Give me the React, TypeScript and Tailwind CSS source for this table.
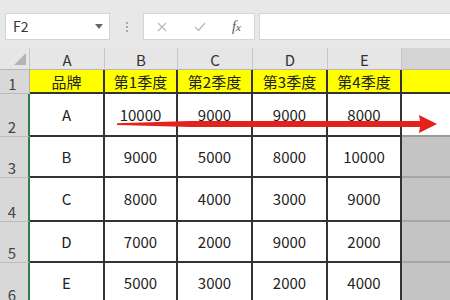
import React from "react";

const font = { fontFamily: '"Noto Sans CJK SC", "Liberation Sans", sans-serif' };

const cols = ["A", "B", "C", "D", "E"];
const widths = ["w-[75px]", "w-[73px]", "w-[75px]", "w-[75px]", "w-[74px]"];

const header = ["品牌", "第1季度", "第2季度", "第3季度", "第4季度"];

const rows = [
  { n: 2, h: "h-[43px]", cells: ["A", "10000", "9000", "9000", "8000"] },
  { n: 3, h: "h-[41px]", cells: ["B", "9000", "5000", "8000", "10000"] },
  { n: 4, h: "h-[44px]", cells: ["C", "8000", "4000", "3000", "9000"] },
  { n: 5, h: "h-[41px]", cells: ["D", "7000", "2000", "9000", "2000"] },
  { n: 6, h: "h-[42px]", cells: ["E", "5000", "3000", "2000", "4000"] },
];

function Toolbar() {
  return (
    <div className="h-[48px] bg-[#e8e8e8] flex items-start pt-[13px] pl-[5px]">
      <div className="w-[105px] h-[27px] bg-white border border-[#d4d4d4] flex items-center justify-between pl-[7px] pr-[6px]">
        <span className="text-[14px] text-[#333]">F2</span>
        <svg width="8" height="5" viewBox="0 0 8 5">
          <path d="M0 0 L8 0 L4 5 Z" fill="#666" />
        </svg>
      </div>
      <div className="w-[33px] h-[27px] flex flex-col items-center justify-center gap-[2px]">
        <span className="w-[2px] h-[2px] bg-[#a8a8a8]" />
        <span className="w-[2px] h-[2px] bg-[#a8a8a8]" />
        <span className="w-[2px] h-[2px] bg-[#a8a8a8]" />
      </div>
      <div className="w-[112px] h-[27px] bg-white border border-[#d4d4d4] flex items-center">
        <svg className="ml-[13px]" width="10" height="10" viewBox="0 0 10 10">
          <path d="M1 1 L9 9 M9 1 L1 9" stroke="#b8b8b8" strokeWidth="1.2" />
        </svg>
        <svg className="ml-[27px]" width="12" height="10" viewBox="0 0 12 10">
          <path d="M1 5 L4.5 8.5 L11 1" stroke="#b8b8b8" strokeWidth="1.2" fill="none" />
        </svg>
        <span
          className="ml-[26px] text-[14px] italic text-[#555]"
          style={{ fontFamily: '"Liberation Serif", serif' }}
        >
          f<span className="text-[11px]">x</span>
        </span>
      </div>
      <div className="ml-[4px] flex-1 h-[27px] bg-white border border-[#d4d4d4] border-r-0" />
    </div>
  );
}

function ColumnHeader() {
  return (
    <div className="flex h-[22px] bg-[#e6e6e6] border-b border-[#b8b8b8]">
      <div className="w-[30px] border-r border-[#c8c8c8] flex items-end justify-end pr-[3px] pb-[4px]">
        <svg width="12" height="12" viewBox="0 0 12 12">
          <path d="M12 0 L12 12 L0 12 Z" fill="#b4b4b4" />
        </svg>
      </div>
      {cols.map((c, i) => (
        <div
          key={c}
          className={`${widths[i]} border-r border-[#c8c8c8] flex items-center justify-center pt-[1px] text-[15px] text-[#333] leading-none`}
        >
          {c}
        </div>
      ))}
      <div className="flex-1 bg-[#d4d4d4]" />
    </div>
  );
}

function RowHead({ n, green }: { n: number; green?: boolean }) {
  return (
    <div
      className={`w-[30px] bg-[#d8d8d8] border-b border-[#bcbcbc] flex items-end justify-center pr-[4px] text-[15px] leading-[18px] text-[#444] ${
        green ? "border-r-2 border-r-[#2e7d4f]" : "border-r border-r-[#b0b0b0]"
      }`}
    >
      {n}
    </div>
  );
}

export default function App() {
  return (
    <div className="w-[450px] h-[300px] overflow-hidden bg-white relative" style={font}>
      <Toolbar />
      <ColumnHeader />
      <div className="flex h-[24px]">
        <RowHead n={1} />
        {header.map((t, i) => (
          <div
            key={i}
            className={`${widths[i]} bg-[#ffff00] border-r-2 border-b-2 border-[#333] flex items-center justify-center pt-[2px] text-[15px] text-[#222]`}
          >
            {t}
          </div>
        ))}
        <div className="flex-1 bg-[#ffff00] border-b-2 border-[#333]" />
      </div>
      {rows.map((r) => (
        <div key={r.n} className={`flex ${r.h}`}>
          <RowHead n={r.n} green />
          {r.cells.map((v, i) => (
            <div
              key={i}
              className={`${widths[i]} border-r-2 border-b-2 border-[#333] flex items-center justify-center pt-[1px] text-[15px] text-[#222]`}
            >
              {v}
            </div>
          ))}
          <div
            className={`flex-1 border-b-2 ${
              r.n === 2 ? "bg-white border-[#9a9a9a]" : "bg-[#c4c4c4] border-[#a6a6a6]"
            }`}
          />
        </div>
      ))}
      <svg
        className="absolute left-0 top-0 pointer-events-none"
        width="450"
        height="300"
        viewBox="0 0 450 300"
      >
        <path
          d="M117 123.2 L190 121 L420 121 L419 115 L437 124 L419 133 L420 127 L190 127 L117 125 Z"
          fill="#e3231b"
        />
      </svg>
    </div>
  );
}
